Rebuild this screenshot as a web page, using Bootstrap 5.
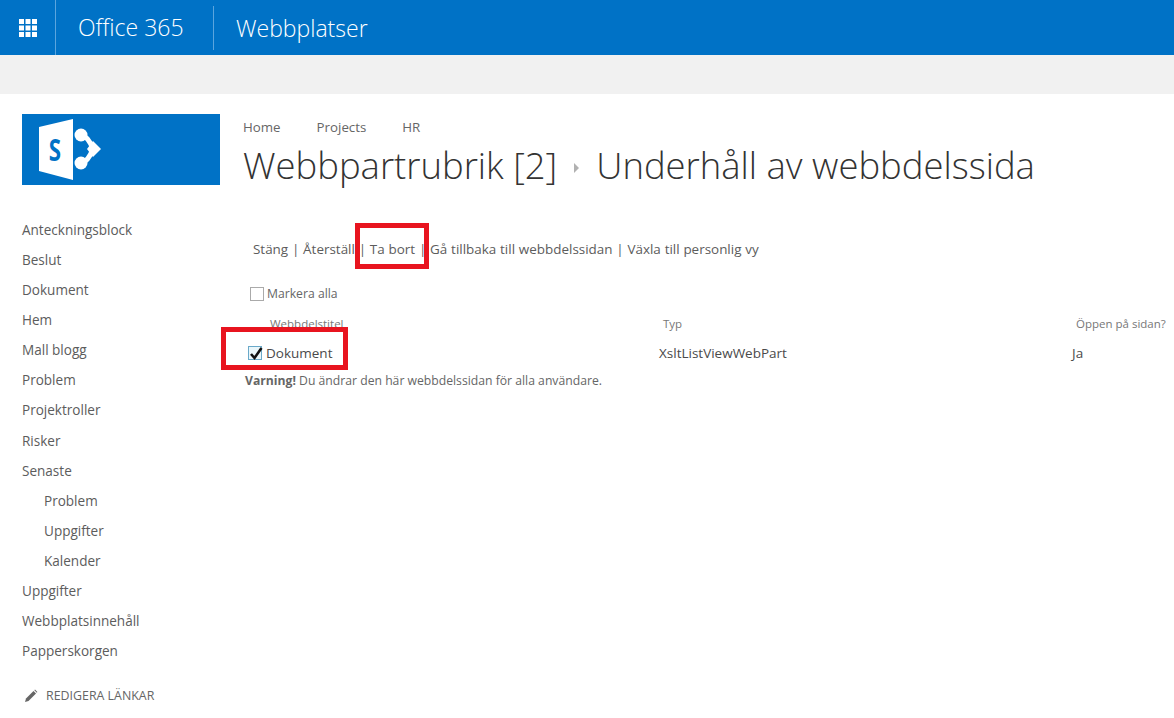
<!DOCTYPE html>
<html lang="sv">
<head>
<meta charset="utf-8">
<title>Underhåll av webbdelssida</title>
<link href="https://cdn.jsdelivr.net/npm/bootstrap@5.3.0/dist/css/bootstrap.min.css" rel="stylesheet">
<style>
html,body{height:718px;overflow:hidden}
body{font-family:"Open Sans","Noto Sans","Liberation Sans",sans-serif;color:#555;font-size:13px;background:#fff}
.suite{height:55px;background:#0072c6;color:#fff}
.waffle{width:56px;height:55px;border-right:1px solid #5ba5de;padding-left:1px}
.brand-a{font-size:23px;font-weight:300;padding-left:22px;width:157px;line-height:55px}
.brand-b{font-size:23px;font-weight:300;padding-left:22px;height:44px;line-height:44px;border-left:1px solid #5ba5de}
.ribbon{height:39px;background:#f1f1f1}
.body-row{padding-left:22px}
.side{width:198px;flex:none;padding-top:20px}
.logo-box{height:71px;background:#0072c6;padding:5px 0 0 16px;margin-bottom:30px}
.qnav{line-height:30px;color:#5c5c5c;font-size:13.55px}
.qnav div{height:30.08px}
.qnav .sub{padding-left:22px}
.edit{margin-top:21px;font-size:12.4px;color:#666;padding-left:2px;gap:8px}
.main-col{padding-left:23px;padding-top:23px;flex:1;min-width:0;position:relative}
.crumbs{gap:36px;font-size:13.3px;line-height:20px;color:#666}
.page-title{font-size:36.45px;font-weight:300;color:#333;line-height:52px;white-space:nowrap;margin:2px 0 0;gap:17px}
.tri{width:0;height:0;border-left:5px solid #b1b1b1;border-top:5px solid transparent;border-bottom:5px solid transparent;margin-top:6px}
.toolbar{margin-top:48px;padding-left:10px;line-height:20px;color:#5c5c5c;font-size:13.45px;word-spacing:.3px;white-space:pre}
.sel-all{margin-top:25px;padding-left:7px;height:20px;gap:3px;font-size:12.2px;color:#666}
.box{width:14px;height:14px;border:1px solid #aaa;background:#fff;flex:none}
.box-on{border-color:#6aa9c9;background:#eaf6fa;position:relative}
.box-on svg{position:absolute;left:0;top:-2px}
.grid-head{display:grid;grid-template-columns:393px 413px 110px;margin-top:10px;height:20px;line-height:20px;font-size:11.5px;color:#777;padding-left:27px;white-space:nowrap}
.grid-row{display:grid;grid-template-columns:411px 413px 110px;margin-top:9px;height:20px;line-height:20px;padding-left:5px;white-space:nowrap;font-size:13.5px;color:#4a4a4a}
.warn{font-size:12.2px;line-height:16px;color:#666;padding-left:2px;margin-top:10px}
.mark-box{position:absolute;border:5px solid #e8141f;pointer-events:none}
.mark-a{left:135px;top:129px;width:74px;height:46px}
.mark-b{left:1px;top:233px;width:127px;height:43px}
</style>
</head>
<body>
<div class="suite d-flex align-items-center">
  <div class="waffle d-flex align-items-center justify-content-center">
    <svg width="18" height="18" viewBox="0 0 18 18" fill="#fff" aria-hidden="true"><rect x="0" y="0" width="5" height="5"/><rect x="6.5" y="0" width="5" height="5"/><rect x="13" y="0" width="5" height="5"/><rect x="0" y="6.5" width="5" height="5"/><rect x="6.5" y="6.5" width="5" height="5"/><rect x="13" y="6.5" width="5" height="5"/><rect x="0" y="13" width="5" height="5"/><rect x="6.5" y="13" width="5" height="5"/><rect x="13" y="13" width="5" height="5"/></svg>
  </div>
  <div class="brand-a">Office 365</div>
  <div class="brand-b">Webbplatser</div>
</div>
<div class="ribbon"></div>
<div class="body-row d-flex">
  <div class="side">
    <div class="logo-box">
      <svg width="64" height="62" viewBox="0 0 64 62" aria-hidden="true">
        <path d="M1 8 L35 0 V61 L1 52Z" fill="#fff"/>
        <text transform="scale(.72 1)" x="15" y="42" font-family="Open Sans, sans-serif" font-weight="700" font-size="31" fill="#0072c6">S</text>
        <path d="M43 16 Q50 17 55 30 Q50 43 43 44" fill="none" stroke="#fff" stroke-width="5"/>
        <circle cx="43" cy="16" r="6.500" fill="#fff"/><circle cx="43" cy="44" r="6.500" fill="#fff"/>
        <path d="M55 22 L63 30 L55 38 L49 30Z" fill="#fff"/>
      </svg>
    </div>
    <div class="qnav">
      <div>Anteckningsblock</div><div>Beslut</div><div>Dokument</div><div>Hem</div><div>Mall blogg</div><div>Problem</div><div>Projektroller</div><div>Risker</div><div>Senaste</div>
      <div class="sub">Problem</div><div class="sub">Uppgifter</div><div class="sub">Kalender</div>
      <div>Uppgifter</div><div>Webbplatsinnehåll</div><div>Papperskorgen</div>
    </div>
    <div class="edit d-flex align-items-center">
      <svg width="14" height="14" viewBox="0 0 14 14" fill="#666" aria-hidden="true"><path d="M1 13 L2 9.5 L9.5 2 L12 4.5 L4.500 12Z"/><path d="M10.300 1.200 L11 .6 L13.400 3 L12.800 3.700Z"/></svg>
      <span>REDIGERA LÄNKAR</span>
    </div>
  </div>
  <div class="main-col">
    <div class="crumbs d-flex"><span>Home</span><span>Projects</span><span>HR</span></div>
    <h1 class="page-title d-flex align-items-center"><span>Webbpartrubrik [2]</span><span class="tri"></span><span>Underhåll av webbdelssida</span></h1>
    <div class="toolbar">Stäng | Återställ | Ta bort | Gå tillbaka till webbdelssidan | Växla till personlig vy</div>
    <div class="sel-all d-flex align-items-center"><span class="box"></span><span>Markera alla</span></div>
    <div class="grid-head"><span>Webbdelstitel</span><span>Typ</span><span>Öppen på sidan?</span></div>
    <div class="grid-row">
      <span class="d-flex align-items-center gap-1"><span class="box box-on"><svg width="14" height="16" viewBox="0 0 14 16" aria-hidden="true"><path d="M2 9 L5.500 13 L12.500 3" fill="none" stroke="#111" stroke-width="2.600"/></svg></span><span>Dokument</span></span>
      <span>XsltListViewWebPart</span><span>Ja</span>
    </div>
    <div class="warn"><strong>Varning!</strong> Du ändrar den här webbdelssidan för alla användare.</div>
    <div class="mark-box mark-a"></div>
    <div class="mark-box mark-b"></div>
  </div>
</div>
<script src="https://cdn.jsdelivr.net/npm/bootstrap@5.3.0/dist/js/bootstrap.bundle.min.js"></script>
</body>
</html>
